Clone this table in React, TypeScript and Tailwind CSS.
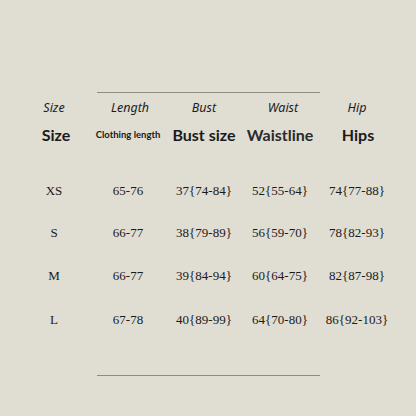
import React from "react";

const cols = ["w-[76px]", "w-[72px]", "w-[80px]", "w-[72px]", "w-[82px]"];

const rows = [
  ["XS", "65-76", "37{74-84}", "52{55-64}", "74{77-88}"],
  ["S", "66-77", "38{79-89}", "56{59-70}", "78{82-93}"],
  ["M", "66-77", "39{84-94}", "60{64-75}", "82{87-98}"],
  ["L", "67-78", "40{89-99}", "64{70-80}", "86{92-103}"],
];

const heights = ["h-[42px]", "h-[42px]", "h-[44px]", "h-[44px]"];

const sans = { fontFamily: '"Noto Sans", "Open Sans", sans-serif' };
const lato = { fontFamily: 'Lato, "Noto Sans", sans-serif' };
const serif = { fontFamily: '"Liberation Serif", "Times New Roman", serif' };

export default function App() {
  return (
    <div className="w-[416px] h-[416px] bg-[#e0ddd3] flex flex-col overflow-hidden">
      <div className="h-[92px]" />
      <div className="ml-[97px] w-[223px] h-px bg-[#8e8b83]" />
      <div className="pl-[16px] flex flex-col">
        <div className="flex h-[26px] items-end pb-[1px] italic text-[12.5px] text-[#1c1c1c]" style={sans}>
          <div className={`${cols[0]} text-center`}>Size</div>
          <div className={`${cols[1]} text-center pl-[4px]`}>Length</div>
          <div className={`${cols[2]} text-center`}>Bust</div>
          <div className={`${cols[3]} text-center pl-[6px]`}>Waist</div>
          <div className={`${cols[4]} text-center`}>Hip</div>
        </div>
        <div className="flex h-[32px] items-center font-bold text-[#1a1a1a]" style={lato}>
          <div className={`${cols[0]} text-center text-[16px] pl-[4px]`}>Size</div>
          <div className={`${cols[1]} text-center text-[9.5px]`}>Clothing length</div>
          <div className={`${cols[2]} text-center text-[16px] whitespace-nowrap`}>Bust size</div>
          <div className={`${cols[3]} text-center text-[16px] text-[#2a2a2a]`}>Waistline</div>
          <div className={`${cols[4]} text-center text-[16px] pl-[2px]`}>Hips</div>
        </div>
      </div>
      <div className="pl-[16px] pt-[19px] flex flex-col" style={serif}>
        {rows.map((r, i) => (
          <div key={r[0]} className={`flex items-center text-[13px] text-[#1a1a1a] ${heights[i]}`}>
            {r.map((c, j) => (
              <div key={j} className={`${cols[j]} text-center whitespace-nowrap`}>
                {c}
              </div>
            ))}
          </div>
        ))}
      </div>
      <div className="h-[33px]" />
      <div className="ml-[97px] w-[223px] h-px bg-[#8e8b83]" />
    </div>
  );
}
